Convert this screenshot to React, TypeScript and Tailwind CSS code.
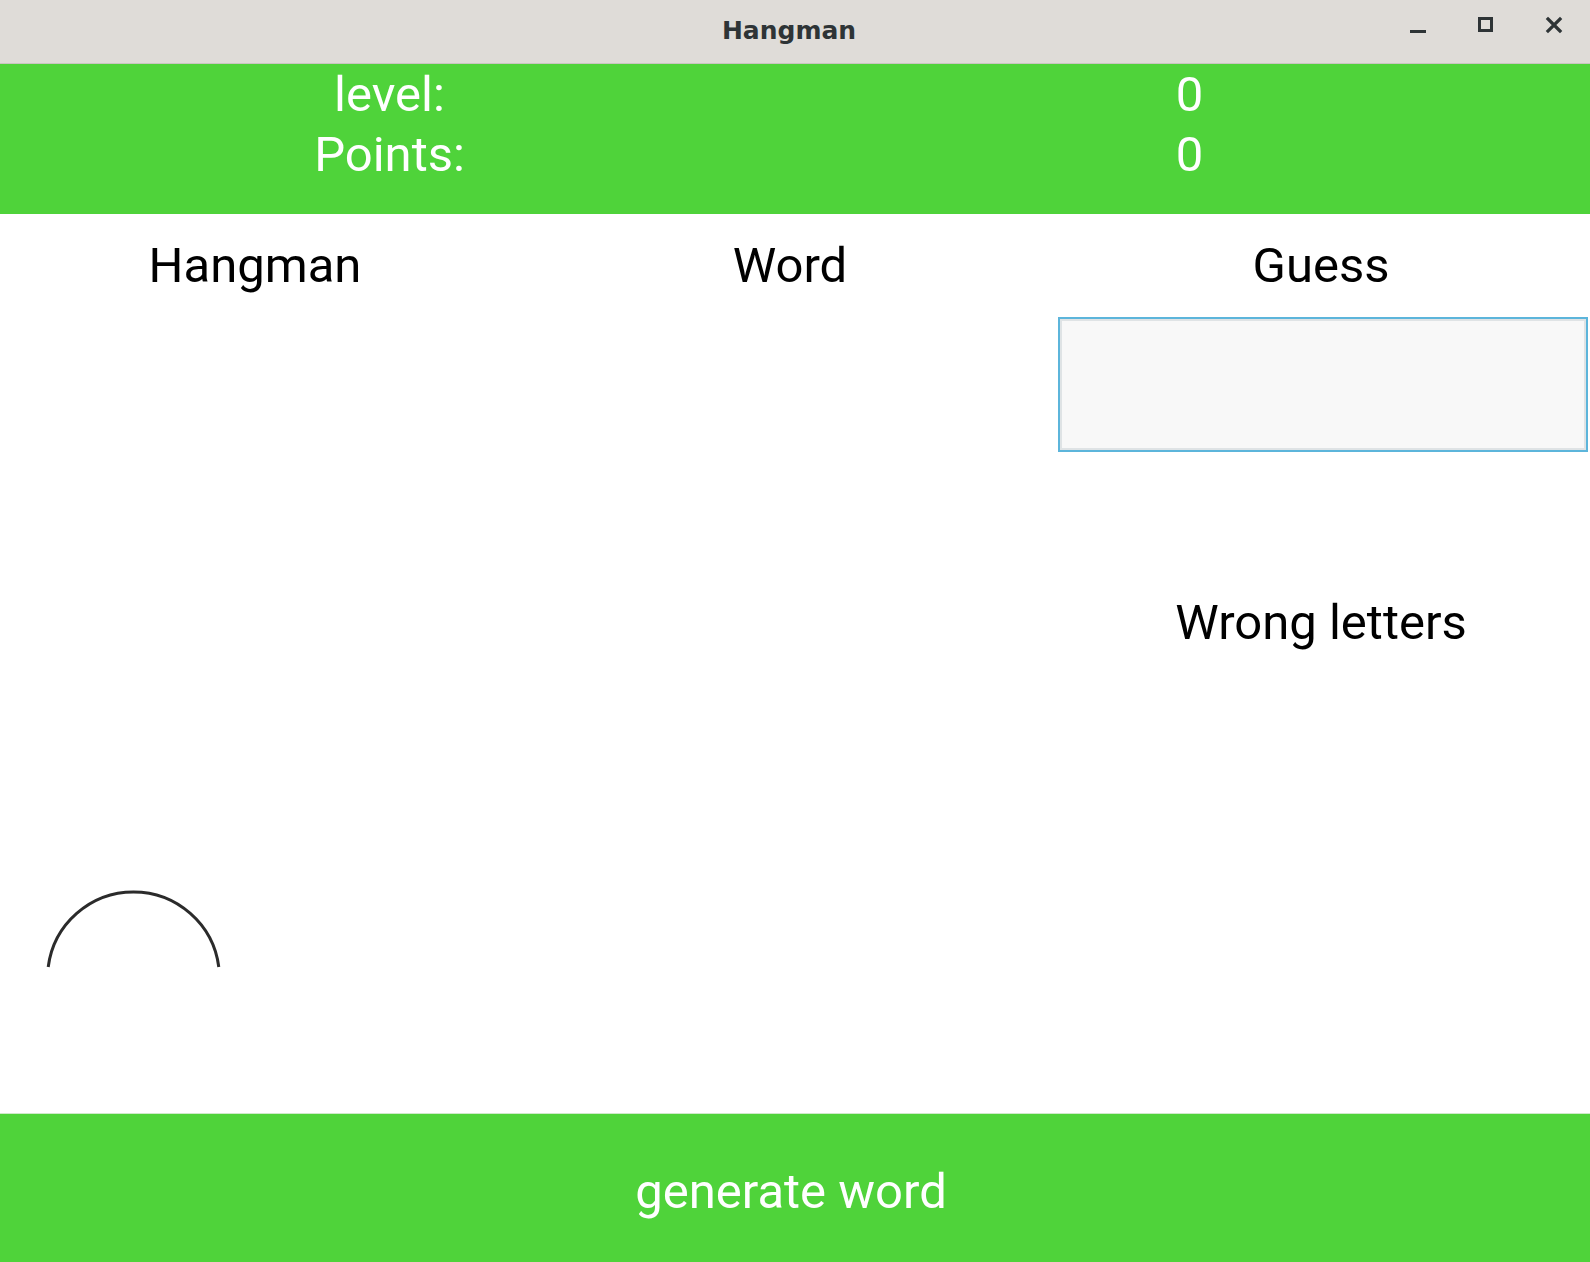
import React from 'react';

const font = { fontFamily: 'Roboto, "Liberation Sans", sans-serif' };

const TitleBar: React.FC = () => {
  return (
    <div className="relative h-[64px] bg-[#dfdcd8] border-b border-[#c9c5c0] flex items-center justify-center pr-[12px]">
      <div className="text-[25px] font-bold text-[#2e3436] -mt-[2px]" style={{ fontFamily: '"DejaVu Sans", sans-serif' }}>
        Hangman
      </div>
      <div className="absolute right-[26px] top-0 h-full flex items-center gap-[48px] -mt-[5px]">
        <svg width="20" height="20" viewBox="0 0 20 20">
          <rect x="2" y="13" width="16" height="3" fill="#2e3436" />
        </svg>
        <svg width="20" height="20" viewBox="0 0 20 20" className="-mt-[4px]">
          <rect x="3.5" y="3.5" width="12" height="12" fill="none" stroke="#2e3436" strokeWidth="3" />
        </svg>
        <svg width="20" height="20" viewBox="0 0 20 20" className="-mt-[4px]">
          <path d="M4 4 L16 16 M16 4 L4 16" stroke="#2e3436" strokeWidth="3.2" strokeLinecap="square" />
        </svg>
      </div>
    </div>
  );
};

const App: React.FC = () => {
  return (
    <div className="w-[1590px] h-[1262px] flex flex-col bg-white overflow-hidden" style={font}>
      <TitleBar />

      {/* stats */}
      <div className="h-[150px] bg-[#4fd33a] text-white text-[49px] leading-none grid grid-cols-2">
        <div className="flex flex-col items-center pr-[16px]">
          <div className="h-[60px] flex items-center">level:</div>
          <div className="h-[60px] flex items-center">Points:</div>
        </div>
        <div className="flex flex-col items-center pr-[6px]">
          <div className="h-[60px] flex items-center">0</div>
          <div className="h-[60px] flex items-center">0</div>
        </div>
      </div>

      {/* columns */}
      <div className="flex-1 grid grid-cols-3 text-[49px] leading-none text-black">
        <div className="flex flex-col">
          <div className="h-[103px] flex items-center justify-center pr-[20px]">Hangman</div>
          <svg width="190" height="100" viewBox="0 0 190 100" className="mt-[563px] ml-[40px]">
            <path d="M8.2 87 A86 86 0 0 1 178.8 87" fill="none" stroke="#2b2b2b" strokeWidth="3" />
          </svg>
        </div>
        <div className="flex flex-col">
          <div className="h-[103px] flex items-center justify-center pr-[10px]">Word</div>
        </div>
        <div className="flex flex-col">
          <div className="h-[103px] flex items-center justify-center pr-[8px]">Guess</div>
          <input
            className="h-[135px] ml-[-2px] mr-[2px] bg-[#f8f8f8] border-2 border-[#5cb5db] shadow-[inset_0_0_0_2px_#dfe3e5] outline-none text-[40px] px-3"
            style={font}
          />
          <div className="h-[340px] flex items-center justify-center pr-[8px]">Wrong letters</div>
        </div>
      </div>

      {/* button */}
      <div className="h-[149px] bg-[#4fd33a] border-t border-[#cfe9c9] flex items-center justify-center text-white text-[49px] leading-none pr-[8px]">
        <span className="mt-[6px]">generate word</span>
      </div>
    </div>
  );
};

export default App;
